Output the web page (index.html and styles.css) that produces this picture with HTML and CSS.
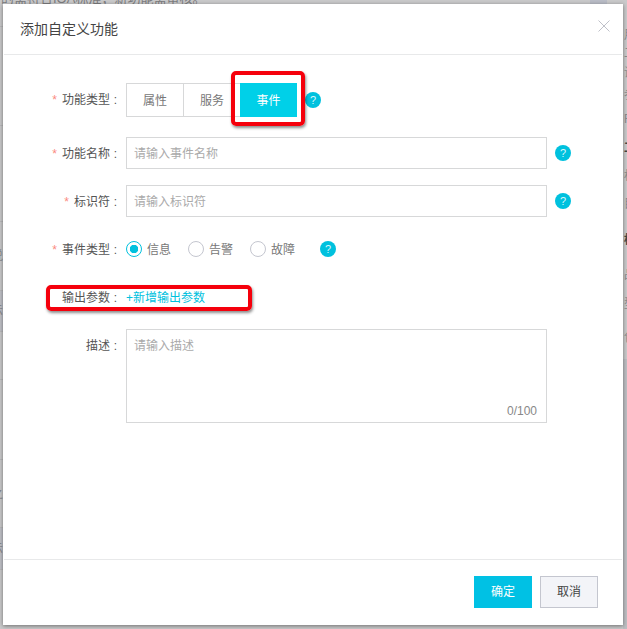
FILE: index.html
```html
<!DOCTYPE html>
<html lang="zh-CN">
<head>
<meta charset="utf-8">
<title>添加自定义功能</title>
<link rel="stylesheet" href="styles.css">
</head>
<body>
<div class="backdrop">
  <div class="top-note"><span>的需符合IOA标准，新功能需审核。</span><i class="top-block"></i></div>
  <div class="sliver-left">
    <div class="sl"></div><div class="sl"></div><div class="sl"></div>
    <div class="sl"><span>说</span></div>
    <div class="sl tint"><span>示</span></div>
    <div class="sl"><span class="dark">r</span></div>
    <div class="sl"><span class="dark">g</span></div>
    <div class="sl"><span>之</span></div>
    <div class="sl tint"><span>示</span></div>
    <div class="sl"></div>
  </div>
  <div class="sliver-right">
    <div></div><div>用</div><div>二</div><div>说</div><div>参</div><div>F</div><div class="dark">工</div><div>标</div><div>目</div><div class="dark">标</div><div>品</div><div>型</div><div>包</div>
  </div>
</div>

<div class="dialog">
  <header class="head">
    <h1 class="title">添加自定义功能</h1>
    <svg class="close" width="12" height="12" viewBox="0 0 12 12"><path d="M.5.500l11 11M11.500.500l-11 11" stroke="#bfc1c9" stroke-width="1" fill="none"/></svg>
  </header>
  <main class="body">
    <div class="row row-seg">
      <label class="label"><em>*</em>功能类型<b>:</b></label>
      <div class="seg">
        <button class="seg-item">属性</button>
        <button class="seg-item">服务</button>
        <button class="seg-item active">事件</button>
      </div>
      <span class="help help-seg">?</span>
    </div>
    <div class="row">
      <label class="label"><em>*</em>功能名称<b>:</b></label>
      <input class="field" placeholder="请输入事件名称">
      <span class="help">?</span>
    </div>
    <div class="row">
      <label class="label"><em>*</em>标识符<b>:</b></label>
      <input class="field" placeholder="请输入标识符">
      <span class="help">?</span>
    </div>
    <div class="row">
      <label class="label"><em>*</em>事件类型<b>:</b></label>
      <div class="radios">
        <span class="radio checked"><span class="radio-text">信息</span></span>
        <span class="radio"><span class="radio-text">告警</span></span>
        <span class="radio"><span class="radio-text">故障</span></span>
      </div>
      <span class="help help-radio">?</span>
    </div>
    <div class="row">
      <label class="label">输出参数<b>:</b></label>
      <a class="link">+新增输出参数</a>
    </div>
    <div class="row row-area">
      <label class="label">描述<b>:</b></label>
      <div class="area-wrap">
        <textarea class="area" placeholder="请输入描述"></textarea>
        <span class="count">0/100</span>
      </div>
    </div>
  </main>
  <footer class="foot">
    <button class="btn primary">确定</button>
    <button class="btn">取消</button>
  </footer>
  <div class="mark mark-seg"></div>
  <div class="mark mark-out"></div>
</div>
</body>
</html>
```
FILE: styles.css
```css
*, *::before, *::after { box-sizing: border-box; }
html, body { height: 100%; }
body {
  margin: 0;
  padding: 4px 4px 4px 3px;
  background: #c9c9ca;
  overflow: hidden;
  font: 12px/1.5 "Liberation Sans", "Noto Sans CJK SC", sans-serif;
  color: #555;
}
.backdrop { position: absolute; inset: 0; color: #8b8b8d; overflow: hidden; }
.dark { color: #444; font-weight: 700; }
.top-note { height: 4px; position: relative; overflow: hidden; white-space: nowrap; }
.top-note span { position: absolute; left: 1px; bottom: -2px; font-size: 13px; line-height: 14px; color: #7d7d7f; }
.top-block { position: absolute; left: 590px; top: 0; width: 17px; height: 4px; background: #b9bcc6; }
.sliver-left {
  position: absolute; left: 0; top: 0; width: 4px; height: 629px;
  display: grid;
  grid-template-rows: 27px 99px 96px 69px 41px 48px 80px 68px 42px 59px;
}
.sl { border-bottom: 1px solid #b9b9bb; display: flex; align-items: center; justify-content: flex-end; overflow: hidden; }
.sl:last-child { border-bottom: 0; }
.sl span { flex: none; width: 13px; margin-left: -10px; }
.tint { background: #bfc0c6; }
.sliver-right {
  position: absolute; left: 623px; top: 0; width: 4px; height: 359px;
  display: grid; overflow: hidden;
  grid-template-rows: 26px 18px 18px 22px 21px 27px 32px 24px 31px 41px 30px 27px 42px;
}
.sliver-right div { display: flex; align-items: center; margin-left: 1px; white-space: nowrap; }
.backdrop::after { content: ""; position: absolute; left: 623px; top: 359px; width: 4px; height: 270px; background: #bdbec2; }

.dialog {
  position: relative;
  height: 621px;
  width: 620px;
  background: #fff;
  box-shadow: 0 1px 4px rgba(0,0,0,.45);
  display: flex;
  flex-direction: column;
}
.head {
  flex: none;
  height: 51px;
  margin: 0 1px;
  padding: 0 12px 0 16px;
  border-bottom: 1px solid #e8e9ea;
  display: flex;
  align-items: center;
  justify-content: space-between;
}
.title { margin: 0 0 1px; font-size: 14px; font-weight: 400; color: #444; line-height: 20px; }
.close { margin-bottom: 7px; }

.body { flex: 1; padding-top: 28px; display: flex; flex-direction: column; gap: 16px; }
.row { display: flex; align-items: center; height: 32px; }
.row-seg { height: 34px; margin-bottom: 4px; }
.row-area { height: 94px; align-items: flex-start; }
.label { flex: none; width: 115px; margin-right: 8px; padding-top: 2px; text-align: right; color: #555; white-space: nowrap; }
.row-seg .label { padding-top: 0; }
.row-area .label { margin-top: 6px; }
.label em { font-style: normal; color: #fb8a80; margin-right: 5px; }
.label b { display: inline-block; width: 8px; font-weight: 400; text-align: right; padding-right: 1px; }

.seg { display: flex; height: 34px; }
.seg-item {
  width: 58px; padding: 2px 0 0; font: inherit; color: #777; background: #fff;
  border: 1px solid #d7d8d9; margin-right: -1px;
}
.seg-item.active { width: 57px; background: #00d0e8; border-color: #00d0e8; color: #fff; margin-right: 0; position: relative; }
.help {
  flex: none; width: 16px; height: 16px; border-radius: 50%;
  background: #00c1de; color: #d8f6fb;
  font-size: 11px; line-height: 16px; text-align: center;
  margin-left: 8px;
}
.help-seg { margin-left: 8px; }
.help-radio { margin-left: 25px; }
.field {
  width: 421px; height: 32px; padding: 2px 7px 0; font: inherit; color: #555;
  border: 1px solid #d7d8d9; border-radius: 0; outline: 0; background: #fff;
}
.field::placeholder, .area::placeholder { color: #aaa; opacity: 1; }
.radios { display: flex; gap: 17px; color: #777; }
.radio { display: flex; align-items: center; gap: 5px; }
.radio-text { padding-top: 2px; }
.radio::before {
  content: ""; width: 16px; height: 16px; border-radius: 50%;
  border: 1px solid #c4c6cf; background: #fff;
}
.radio.checked::before {
  border-color: #00c1de;
  background: radial-gradient(circle, #00c1de 0 4px, #fff 4.5px);
}
.link { padding-top: 2px; color: #00c1de; }
.area-wrap { position: relative; width: 421px; height: 94px; }
.area {
  display: block; width: 100%; height: 100%; padding: 7px; resize: none;
  font: inherit; border: 1px solid #d7d8d9; border-radius: 0; outline: 0;
}
.count { position: absolute; right: 10px; bottom: 3px; color: #888; }

.foot {
  flex: none; height: 66px; margin: 0 1px; padding: 16px 24px 0 0;
  border-top: 1px solid #e8e9ea;
  display: flex; justify-content: flex-end; align-items: flex-start; gap: 8px;
}
.btn {
  width: 58px; height: 32px; padding: 0; font: inherit;
  color: #444; background: #f3f4f8; border: 1px solid #c4c6cf;
}
.btn.primary { background: #00c1e4; border-color: #00c1e4; color: #fff; }

.mark {
  position: absolute; border: 4px solid #f5000c; border-radius: 5px;
  box-shadow: 1px 2px 3px rgba(0,0,0,.45);
}
.mark-seg { left: 228px; top: 67px; width: 74px; height: 55px; }
.mark-out { left: 43px; top: 281px; width: 206px; height: 26px; }
```
